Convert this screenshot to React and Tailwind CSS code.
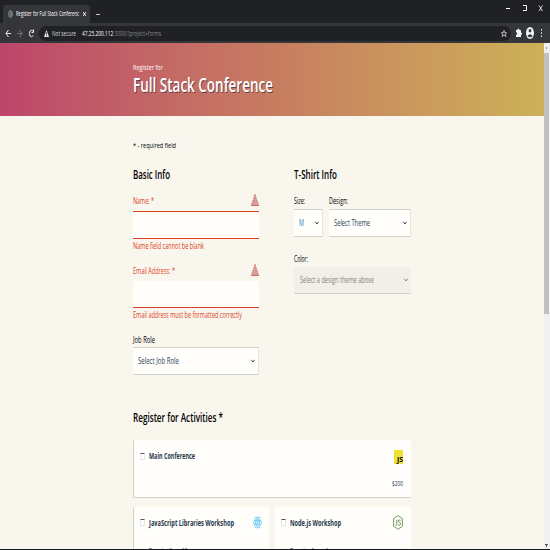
import React, { useLayoutEffect, useRef, useState } from "react";

// One line of text condensed horizontally to the width of its box.
function Fit({ children, className = "" }) {
  const box = useRef(null);
  const text = useRef(null);
  const [scale, setScale] = useState(1);
  useLayoutEffect(() => {
    setScale(box.current.offsetWidth / text.current.getBoundingClientRect().width);
  }, []);
  return (
    <div ref={box} className={`shrink-0 whitespace-nowrap ${className}`}>
      <span ref={text} className="inline-block origin-left" style={{ transform: `scaleX(${scale})` }}>
        {children}
      </span>
    </div>
  );
}

function Chevron() {
  return (
    <svg className="h-[4px] w-[4px] shrink-0" viewBox="0 0 4 4" fill="none" stroke="currentColor">
      <path d="M.3 .8L2 3L3.7 .8" />
    </svg>
  );
}

function Select({ children, className = "" }) {
  return (
    <div className={`flex h-7 items-center justify-between rounded-[1px] border-y border-r border-[#cfd2c8] border-r-[#e5e5dd] bg-[#fffefa] pr-[3px] pl-[5px] text-[8.5px] leading-3 text-[#2c425c] ${className}`}>
      {children}
      <span className="text-[#444]"><Chevron /></span>
    </div>
  );
}

function Warning() {
  return (
    <svg className="h-3 w-2 shrink-0" viewBox="0 0 8 12">
      <path d="M4 .5L7.6 11.3H.4Z" fill="#d3a3a0" stroke="#dc6257" strokeWidth=".8" strokeDasharray="2 .8" />
      <path d="M0 11.5H8" stroke="#d96c62" />
      <path d="M4 4V8M4 9V10" stroke="#c9908b" strokeWidth=".5" />
    </svg>
  );
}

function Checkbox() {
  return <span className="h-[7px] w-[5px] shrink-0 rounded-[1px] border border-[#e4e4e4] border-t-[#555] bg-white" />;
}

function ReactLogo() {
  return (
    <svg className="h-[13px] w-[9px] shrink-0" viewBox="0 0 18 18" preserveAspectRatio="none" fill="none" stroke="#70ccf3" strokeWidth="1.5">
      <ellipse cx="9" cy="9" rx="8.2" ry="3.3" />
      <ellipse cx="9" cy="9" rx="8.2" ry="3.3" transform="rotate(60 9 9)" />
      <ellipse cx="9" cy="9" rx="8.2" ry="3.3" transform="rotate(120 9 9)" />
      <circle cx="9" cy="9" r="1" />
    </svg>
  );
}

function NodeLogo() {
  return (
    <svg className="h-[15px] w-[10px] shrink-0" viewBox="0 0 10 15" fill="none" stroke="#719c62" strokeWidth="1">
      <path d="M5 .6L9.4 3.6V11.2L5 14.3L.6 11.2V3.6Z" />
      <path d="M3.8 4.8V9.6Q3.8 10.8 2.4 10.2M7.8 5.2Q5.3 4.3 5.2 6.1Q5.2 7.2 6.5 7.4Q8 7.7 7.7 9.2Q7.2 10.7 5 9.8" />
    </svg>
  );
}

function BrowserChrome() {
  return (
    <header className="h-[43px] bg-[#202124] text-white">
      <div className="flex h-[23px] pl-[3px]">
        <div className="mt-[5px] flex h-[18px] w-[87px] items-center rounded-t-[3px] bg-[#35363a] pl-[5px]">
          <svg className="h-2 w-[5px]" viewBox="0 0 5 8">
            <ellipse cx="2.5" cy="4" rx="2.4" ry="3.8" fill="#77797b" />
            <path d="M1 2L2.5 3L1.5 5L3 6.5" fill="none" stroke="#4b4c50" strokeWidth=".8" />
          </svg>
          <Fit className="ml-[3px] w-[63px] text-[7px] leading-3 font-medium text-white">Register for Full Stack Conferenc</Fit>
          <svg className="ml-1 h-[4px] w-[3px]" viewBox="0 0 3 4" stroke="white" strokeWidth=".9"><path d="M0 0L3 4M3 0L0 4" /></svg>
        </div>
        <span className="mt-[14px] ml-[6px] h-px w-[4px] bg-[#c5c5c6]" />
        <div className="mt-[5px] mr-[7px] ml-auto">
          <svg className="h-[7px] w-[37px]" viewBox="0 0 37 7" fill="none" stroke="white">
            <path d="M0 3.5H4M17 .5H20.5V5.5H17" />
            <path d="M33 .5L36.5 6M36.5 .5L33 6" strokeWidth=".8" />
          </svg>
        </div>
      </div>
      <div className="flex h-5 items-center bg-[#35363a]">
        <svg className="ml-[5px] h-[9px] w-[30px]" viewBox="0 0 30 9" fill="none" stroke="#e8e8e8">
          <path d="M6 4.5H1M3.5 1L1 4.5L3.5 8" />
          <path d="M12 4.5H17M14.5 1L17 4.5L14.5 8" stroke="#77787c" />
          <path d="M28 2Q26.5 .5 25 2Q23.8 4.5 25 7Q26.7 8.7 28.3 6.5M28.5 .5V3.5H26.5" />
        </svg>
        <div className="ml-1 flex h-[15px] w-[472px] items-center rounded-full bg-[#202124] pl-[5px]">
          <svg className="h-[7px] w-[5px]" viewBox="0 0 5 7"><path d="M2.5 0L5 7H0Z" fill="#e8e8e8" /><path d="M2.5 2.3V4.3M2.5 5V6" stroke="#202124" strokeWidth=".8" /></svg>
          <Fit className="ml-[3px] w-[24px] text-[8px] leading-3 text-[#ddd]">Not secure</Fit>
          <Fit className="ml-[6px] w-[79px] text-[8px] leading-3 text-[#85878b]">
            <span className="text-white">47.25.200.112</span>:3000/?project=forms
          </Fit>
          <svg className="mr-[4px] ml-auto h-[7px] w-[6px]" viewBox="0 0 6 7" fill="none" stroke="#ddd" strokeWidth=".8"><path d="M3 .5L3.7 2.7H5.6L4.2 4.1L5 6.5L3 5L1 6.5L1.8 4.1L.4 2.7H2.3Z" /></svg>
        </div>
        <svg className="ml-[5px] h-3 w-[28px]" viewBox="0 0 28 12" fill="#f1f3f4">
          <path d="M0 3H1.3Q1.4 1.5 2.4 1.5T3.5 3H5V5.5Q6 5.5 6 6.6T5 8V10H0V8Q1.2 7.5 1.2 6.5T0 5Z" />
          <ellipse cx="14" cy="6" rx="4" ry="6" />
          <ellipse cx="14" cy="3.8" rx="1.4" ry="1.8" fill="#35363a" />
          <path d="M11.4 9Q14 5.5 16.6 9Q14 11.5 11.4 9Z" fill="#35363a" />
          <path d="M25 2H26V3.5H25ZM25 5.2H26V6.7H25ZM25 8.5H26V10H25Z" />
        </svg>
      </div>
    </header>
  );
}

function BasicInfo() {
  return (
    <section className="w-[126px]">
      <Fit className="h-[21px] w-[37px] text-[12.5px] leading-4 font-semibold">Basic Info</Fit>
      <div className="mt-[-1px] flex h-[24px] justify-between pt-[8px] text-[8.5px] leading-3 text-[#dc3e20]">
        <Fit className="w-[21px]">Name: *</Fit><div className="mt-[-1px]"><Warning /></div>
      </div>
      <div className="h-7 border-y border-[#dc3e20] bg-[#fffefa]" />
      <Fit className="mt-px h-[24px] w-[71px] text-[8.5px] leading-3 text-[#dc3e20]">Name field cannot be blank</Fit>
      <div className="flex h-[17px] justify-between text-[8.5px] leading-3 text-[#dc3e20]">
        <Fit className="mt-px w-[42px]">Email Address: *</Fit><Warning />
      </div>
      <div className="h-[27px] rounded-t-[1px] border-b border-[#dc3e20] bg-[#fffefa]" />
      <Fit className="mt-[1px] h-[25px] w-[109px] text-[8.5px] leading-3 text-[#dc3e20]">Email address must be formatted correctly</Fit>
      <Fit className="h-[13px] w-[22px] text-[8.5px] leading-3">Job Role</Fit>
      <Select><Fit className="w-[41px]">Select Job Role</Fit></Select>
    </section>
  );
}

function ShirtInfo() {
  return (
    <section className="w-[117px]">
      <Fit className="h-[28px] w-[43px] text-[12.5px] leading-4 font-semibold">T-Shirt Info</Fit>
      <div className="flex gap-[6px] text-[8.5px] leading-3">
        <div className="w-[29px]">
          <Fit className="h-[14px] w-[11px]">Size:</Fit>
          <Select><Fit className="w-[5px] text-[#3b83b3]">M</Fit></Select>
        </div>
        <div className="w-[82px]">
          <Fit className="h-[14px] w-[19px]">Design:</Fit>
          <Select><Fit className="w-[36px]">Select Theme</Fit></Select>
        </div>
      </div>
      <Fit className="mt-[16px] h-[14px] w-[14px] text-[8.5px] leading-3">Color:</Fit>
      <div className="flex h-[27px] items-center justify-between border-b border-[#cfd2c8] bg-[#f2efe9] pr-[3px] pl-[6px] text-[8.5px] leading-3 text-[#85837d]">
        <Fit className="w-[74px]">Select a design theme above</Fit>
        <Chevron />
      </div>
    </section>
  );
}

function Activities() {
  const card = "rounded-[2px] bg-[#fffefa]";
  return (
    <section className="mt-[35px] w-[278px]">
      <Fit className="h-[30px] w-[90px] text-[12.5px] leading-4 font-semibold">Register for Activities *</Fit>
      <div className={`flex h-[58px] border-b border-l border-[#cfd2c8] pl-[6px] pr-2 pt-[10px] text-[#26374c] ${card}`}>
        <div className="pt-[2px]"><div className="flex h-2 items-center gap-1"><Checkbox /><Fit className="w-[46px] text-[8px] leading-3 font-bold">Main Conference</Fit></div></div>
        <div className="ml-auto flex flex-col items-end">
          <div className="flex h-[14px] w-[9px] items-end justify-end bg-[#eee034] text-black">
            <Fit className="w-[6px] text-[7.5px] leading-[9px] font-bold">JS</Fit>
          </div>
          <Fit className="mt-[14px] w-[11px] text-[7px] leading-3">$200</Fit>
        </div>
      </div>
      <div className="mt-[9px] flex gap-[6px] text-[#26374c]">
        <div className={`h-[59px] w-[136px] border-l border-[#cfd2c8] pl-[6px] pr-[7px] pt-[8px] ${card}`}>
          <div className="flex h-[15px] items-center gap-1"><Checkbox /><Fit className="w-[85px] text-[8px] leading-3 font-bold">JavaScript Libraries Workshop</Fit><span className="ml-auto"><ReactLogo /></span></div>
          <Fit className="mt-[14px] ml-[9px] w-[46px] text-[8px] leading-3">Tuesday 9am–12pm</Fit>
        </div>
        <div className={`h-[59px] w-[136px] pl-[6px] pr-[8px] pt-[8px] ${card}`}>
          <div className="flex h-[15px] items-center gap-1"><Checkbox /><Fit className="w-[51px] text-[8px] leading-3 font-bold">Node.js Workshop</Fit><span className="ml-auto"><NodeLogo /></span></div>
          <Fit className="mt-[14px] ml-[9px] w-[46px] text-[8px] leading-3">Tuesday 1pm–4pm</Fit>
        </div>
      </div>
    </section>
  );
}

export default function App() {
  return (
    <div className="h-[550px] w-[550px] overflow-hidden border-b border-[#17191a] bg-[#f9f6ee] font-['Open_Sans',sans-serif] text-black">
      <BrowserChrome />
      <div className="flex h-[506px]">
        <main className="w-[544px] overflow-hidden">
          <div className="h-[73px] bg-linear-to-r from-[#bd456b] via-[#c77c60] to-[#ccb157] pt-[18px] pl-[133px] text-white">
            <Fit className="w-[30px] text-[8px] leading-3">Register for</Fit>
            <Fit className="w-[140px] text-[20px] leading-6 font-semibold [text-shadow:1px_1px_0_#65404a]">Full Stack Conference</Fit>
          </div>
          <div className="pt-[23px] pl-[133px]">
            <Fit className="w-[43px] text-[8px] leading-3">* - required field</Fit>
            <div className="mt-[16px] flex gap-[35px]"><BasicInfo /><ShirtInfo /></div>
            <Activities />
          </div>
        </main>
        <aside className="w-[6px] bg-[#f1f1f1]">
          <svg className="h-[10px] w-[5px]" viewBox="0 0 5 10"><path d="M2 4H3V6H2Z" fill="#888" /></svg>
          <div className="h-[261px] w-[5px] bg-[#c1c1c1]" />
          <svg className="mt-[229px] h-[5px] w-[5px]" viewBox="0 0 5 5"><path d="M1 1H4V2H3V4H2V2H1Z" fill="#505050" /></svg>
        </aside>
      </div>
    </div>
  );
}
